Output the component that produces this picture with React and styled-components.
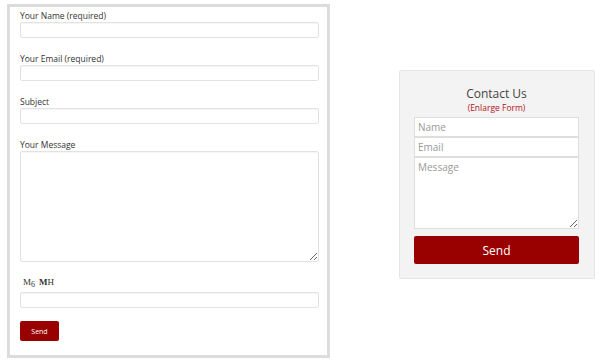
import React from 'react';
import styled, { createGlobalStyle } from 'styled-components';

const GlobalStyle = createGlobalStyle`
  body {
    margin: 0;
    background: #fff;
    font-family: "Open Sans", "Liberation Sans", sans-serif;
  }
`;

const Page = styled.div`
  display: flex;
  align-items: flex-start;
  width: 600px;
  height: 360px;
  overflow: hidden;
`;

// Formulario principal
const FormBox = styled.form`
  box-sizing: border-box;
  width: 323px;
  margin: 4px 0 0 7px;
  padding: 2px 8px 14px 10px;
  border: 3px solid #dcdcdc;
  background: #fff;
`;

const Field = styled.div`
  margin-bottom: ${props => props.gap || 14}px;
`;

const Label = styled.label`
  display: block;
  height: 13px;
  line-height: 13px;
  font-size: 8.5px;
  color: #333;
`;

const TextInput = styled.input`
  display: block;
  box-sizing: border-box;
  width: 299px;
  height: 16px;
  margin: 0;
  border: 1px solid #e2e2e2;
  border-radius: 2px;
  box-shadow: inset 0 1px 1px rgba(0, 0, 0, 0.04);
  background: #fff;
`;

const TextArea = styled.textarea`
  display: block;
  box-sizing: border-box;
  width: 299px;
  height: 111px;
  margin: 0;
  border: 1px solid #e2e2e2;
  border-radius: 2px;
  box-shadow: inset 0 1px 1px rgba(0, 0, 0, 0.04);
  resize: vertical;
`;

const Captcha = styled.div`
  height: 16px;
  padding-left: 3px;
  font-family: "Liberation Serif", "DejaVu Serif", serif;
  font-size: 9px;
  line-height: 12px;
  color: #333;

  sub {
    font-size: 8px;
    vertical-align: -2px;
    margin-right: 4px;
  }

  b {
    font-weight: 700;
  }
`;

const SmallButton = styled.button`
  display: block;
  width: 39px;
  height: 20px;
  padding: 0;
  border: none;
  border-radius: 2px;
  background: #990000;
  color: #fff;
  font-family: inherit;
  font-size: 7px;
`;

// Widget lateral
const Widget = styled.div`
  box-sizing: border-box;
  width: 196px;
  margin: 70px 0 0 69px;
  padding: 14px 15px 14px 14px;
  background: #f3f3f3;
  border: 1px solid #e6e6e6;
  border-radius: 2px;
`;

const WidgetTitle = styled.div`
  text-align: center;
  font-size: 12px;
  line-height: 17px;
  color: #444;
`;

const EnlargeLink = styled.a`
  display: block;
  text-align: center;
  font-size: 8.5px;
  line-height: 12px;
  color: #b3141b;
  text-decoration: none;
  margin-bottom: 3px;
`;

const WidgetInput = styled.input`
  display: block;
  box-sizing: border-box;
  width: 100%;
  height: 20px;
  margin: 0;
  padding: 0 3px;
  border: 1px solid #dedede;
  background: #fff;
  font-family: inherit;
  font-size: 10px;
  color: #444;

  &::placeholder {
    color: #999;
  }
`;

const WidgetArea = styled.textarea`
  display: block;
  box-sizing: border-box;
  width: 100%;
  height: 72px;
  margin: 0;
  padding: 2px 3px;
  border: 1px solid #dedede;
  background: #fff;
  font-family: inherit;
  font-size: 10px;
  resize: vertical;

  &::placeholder {
    color: #999;
  }
`;

const BigButton = styled.button`
  display: block;
  width: 100%;
  height: 28px;
  margin-top: 7px;
  border: none;
  border-radius: 2px;
  background: #990000;
  color: #fff;
  font-family: inherit;
  font-size: 12px;
`;

const App = () => {
  return (
    <Page>
      <GlobalStyle />
      <FormBox onSubmit={e => e.preventDefault()}>
        <Field>
          <Label>Your Name (required)</Label>
          <TextInput type="text" />
        </Field>
        <Field>
          <Label>Your Email (required)</Label>
          <TextInput type="email" />
        </Field>
        <Field>
          <Label>Subject</Label>
          <TextInput type="text" />
        </Field>
        <Field>
          <Label>Your Message</Label>
          <TextArea />
        </Field>
        <Field gap={13}>
          <Captcha>
            M<sub>6</sub><b>M</b>H
          </Captcha>
          <TextInput type="text" />
        </Field>
        <SmallButton type="submit">Send</SmallButton>
      </FormBox>

      <Widget>
        <WidgetTitle>Contact Us</WidgetTitle>
        <EnlargeLink href="#">(Enlarge Form)</EnlargeLink>
        <WidgetInput placeholder="Name" />
        <WidgetInput placeholder="Email" />
        <WidgetArea placeholder="Message" />
        <BigButton>Send</BigButton>
      </Widget>
    </Page>
  );
};

export default App;
